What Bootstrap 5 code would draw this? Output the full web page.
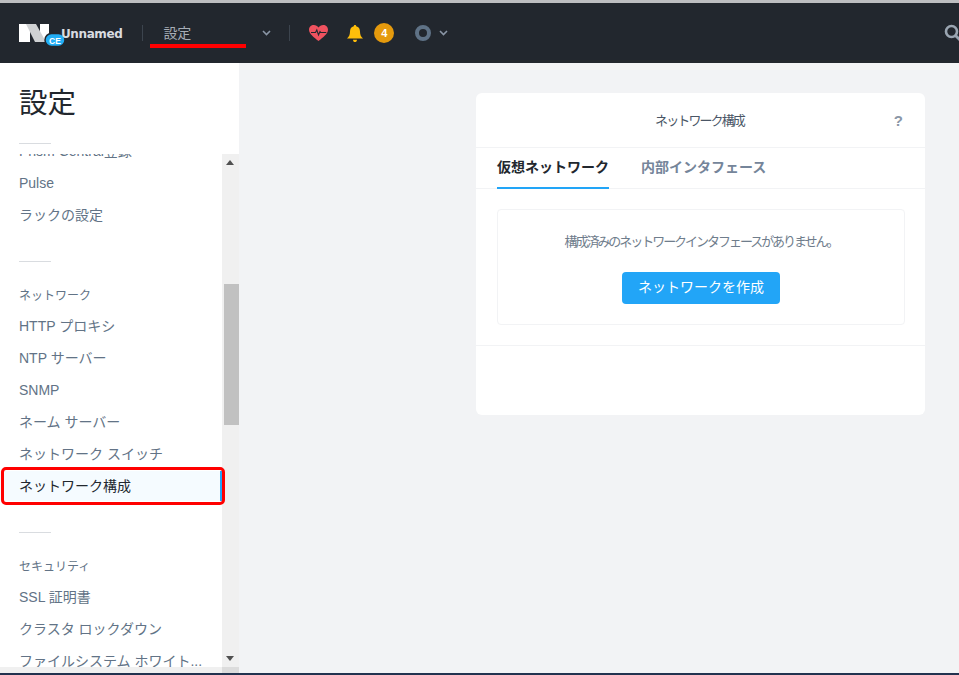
<!DOCTYPE html>
<html lang="ja">
<head>
    <meta charset="UTF-8">
    <meta name="viewport" content="width=device-width, initial-scale=1.0">
    <title>ネットワーク構成</title>
    <link href="https://cdn.jsdelivr.net/npm/bootstrap@5.3.2/dist/css/bootstrap.min.css" rel="stylesheet">
    <style>
        html, body {
            height: 100%;
            overflow: hidden;
        }
        body {
            background-color: #f2f3f5;
            font-family: "Liberation Sans", "Noto Sans CJK JP", sans-serif;
            font-size: 14px;
            color: #627386;
            border-top: 3px solid #bdbec0;
            border-bottom: 2px solid #22324f;
        }
        .app {
            height: 670px;
        }
        /* barra superior */
        .topbar {
            height: 60px;
            background-color: #22272e;
            padding-left: 19px;
        }
        .brand-name {
            font-family: "DejaVu Sans", sans-serif;
            font-weight: 700;
            font-size: 12px;
            letter-spacing: -.4px;
            color: #d9dce0;
            margin-left: -4px;
            margin-top: 2px;
        }
        .logo {
            width: 46px;
            height: 30px;
        }
        .vline {
            width: 1px;
            height: 16px;
            background-color: #3c444e;
        }
        .vline-first {
            margin-left: 20px;
        }
        .page-select {
            width: 108px;
            color: #a6adb6;
            margin-left: 20px;
            margin-right: 18px;
        }
        .icon-heart {
            margin-left: 19px;
        }
        .icon-bell {
            margin-left: 19px;
        }
        .alert-count {
            width: 20px;
            height: 20px;
            margin-left: 11px;
            background-color: #e59a0d;
            color: #fff;
            font-size: 11px;
            font-weight: 700;
        }
        .icon-ring {
            margin-left: 21px;
        }
        .search-icon {
            margin-left: auto;
            margin-right: -3px;
        }
        .mark-under {
            position: absolute;
            left: 150px;
            top: 41px;
            width: 96px;
            height: 4px;
            background-color: #f00;
        }
        /* menu lateral */
        .sidebar {
            width: 239px;
            background-color: #fff;
        }
        .side-title {
            height: 91px;
            padding: 23px 0 0 19px;
            font-size: 28.5px;
            line-height: 34px;
            color: #22272e;
        }
        .side-title .side-rule {
            margin-top: 23px;
            margin-left: 0;
        }
        .side-rule {
            width: 32px;
            height: 1px;
            background-color: #d9dce0;
            margin-left: 19px;
        }
        .side-body {
            height: 513px;
        }
        .side-list {
            width: 222px;
            overflow: hidden;
        }
        .side-list a {
            display: block;
            height: 32px;
            line-height: 32px;
            padding-left: 19px;
            color: #627386;
            text-decoration: none;
            white-space: nowrap;
        }
        .side-list a.clip {
            margin-top: -19px;
        }
        .side-list a.active {
            height: 30px;
            margin-top: 1px;
            margin-bottom: 1px;
            line-height: 30px;
            background-color: #f5fbff;
            border-right: 2px solid #22a5f7;
            color: #22272e;
        }
        .side-list .side-rule {
            margin-top: 30px;
            margin-bottom: 24px;
        }
        .side-list .active + .side-rule {
            margin-top: 31px;
        }
        .side-label {
            font-size: 12px;
            height: 18px;
            line-height: 21px;
            padding-left: 19px;
            margin-bottom: 6px;
        }
        .scroll-y {
            width: 17px;
            background-color: #f0f0f0;
        }
        .scroll-y .thumb {
            width: 15px;
            height: 141px;
            margin: 113px 0 0 2px;
            background-color: #c1c1c1;
        }
        .arrow {
            height: 17px;
            padding-left: 4px;
        }
        .scroll-x {
            height: 6px;
            background-color: #f0f0f0;
        }
        .scroll-x .corner {
            width: 17px;
            background-color: #dcdcdc;
        }
        .mark-box {
            position: absolute;
            left: 1px;
            top: 464px;
            width: 224px;
            height: 38px;
            border: 3px solid #f00;
            border-radius: 5px;
        }
        /* contenido */
        .main-area {
            padding-top: 30px;
            padding-left: 237px;
        }
        .net-card {
            width: 449px;
            height: 322px;
            border: 0;
            border-radius: 6px;
            background-color: #fff;
            color: #627386;
        }
        .net-head {
            height: 55px;
            padding-top: 2px;
            padding-right: 2px;
            border-bottom: 1px solid #f2f3f5;
            font-size: 13px;
            letter-spacing: -1.9px;
            color: #4a5666;
        }
        .help {
            position: absolute;
            right: 22px;
            top: 17px;
            font-weight: 700;
            font-size: 15px;
            letter-spacing: 0;
            color: #8a96a6;
        }
        .net-tabs {
            height: 41px;
            padding-left: 21px;
            border-bottom: 1px solid #f2f3f5;
        }
        .net-tabs span {
            height: 40px;
            line-height: 38px;
            font-weight: 700;
            color: #75859a;
        }
        .net-tabs .on {
            color: #22272e;
            border-bottom: 2px solid #22a5f7;
            height: 41px;
        }
        .net-body {
            height: 157px;
            padding: 20px 20px 0 21px;
            border-bottom: 1px solid #f2f3f5;
        }
        .empty-box {
            height: 116px;
            border: 1px solid #f2f3f5;
            border-radius: 4px;
            padding-top: 21px;
        }
        .empty-box p {
            font-size: 13px;
            letter-spacing: -2.04px;
            line-height: 21px;
            margin-bottom: 20px;
            color: #6f7d8c;
        }
        .btn-create {
            width: 158px;
            height: 32px;
            padding: 0 0 2px;
            border: 0;
            border-radius: 4px;
            background-color: #22a5f7;
            color: #fff;
            font-size: 14px;
        }
    </style>
</head>
<body>
    <div class="app position-relative d-flex flex-column">
        <!-- barra superior -->
        <nav class="topbar d-flex align-items-center flex-shrink-0">
            <svg class="logo" viewBox="0 0 46 30">
                <rect x="0" y="6" width="11" height="18" fill="#fff"/>
                <rect x="21" y="6" width="9" height="18" fill="#fff"/>
                <polygon points="7,6 17,6 27,24 16,24" fill="#cfd1d3"/>
                <rect x="26" y="15.500" width="20" height="13" rx="6.500" fill="#22aef5" stroke="#22272e" stroke-width="1.500"/>
                <text x="36" y="25.500" text-anchor="middle" font-family="Liberation Sans" font-size="8.500" font-weight="700" fill="#fff">CE</text>
            </svg>
            <span class="brand-name">Unnamed</span>
            <span class="vline vline-first"></span>
            <span class="page-select d-flex align-items-center justify-content-between">
                設定
                <svg width="9" height="6" viewBox="0 0 9 6"><path d="M1 1l3.500 3.500L8 1" fill="none" stroke="#8a96a6" stroke-width="1.600"/></svg>
            </span>
            <span class="vline"></span>
            <svg class="icon-heart" width="19" height="16" viewBox="0 0 19 16">
                <path d="M9.500 16C5 12.500 0 9 0 4.800 0 2 2.200 0 4.800 0c2 0 3.600 1 4.700 2.600C10.600 1 12.200 0 14.200 0 16.800 0 19 2 19 4.800 19 9 14 12.500 9.500 16z" fill="#f0525f"/>
                <path d="M2 7.500h4.500l1.300-2.500 1.700 5 1.500-3.500.8 1h5.500" fill="none" stroke="#22272e" stroke-width="1.100"/>
            </svg>
            <svg class="icon-bell" width="16" height="17" viewBox="0 0 16 17">
                <path d="M8 0c.8 0 1.200.5 1.200 1.200C11.800 1.800 13 3.800 13 6.500c0 3 .8 5 3 7H0c2.200-2 3-4 3-7 0-2.700 1.200-4.700 3.800-5.300C6.800.5 7.200 0 8 0z" fill="#ffbe0b"/>
                <path d="M6 14.700h4c0 1.400-.9 2.300-2 2.300s-2-.9-2-2.300z" fill="#ffbe0b"/>
            </svg>
            <span class="alert-count rounded-circle d-flex align-items-center justify-content-center">4</span>
            <svg class="icon-ring" width="16" height="16" viewBox="0 0 16 16">
                <circle cx="8" cy="8" r="6" fill="none" stroke="#5f7286" stroke-width="4"/>
            </svg>
            <svg class="ms-2" width="9" height="6" viewBox="0 0 9 6"><path d="M1 1l3.500 3.500L8 1" fill="none" stroke="#8a96a6" stroke-width="1.600"/></svg>
            <svg class="search-icon" width="18" height="18" viewBox="0 0 18 18">
                <circle cx="7.500" cy="7.500" r="5.500" fill="none" stroke="#9aa5b1" stroke-width="2.600"/>
                <path d="M11.500 11.500L17 17" stroke="#9aa5b1" stroke-width="3"/>
            </svg>
        </nav>
        <span class="mark-under"></span>

        <div class="d-flex flex-grow-1">
            <!-- menu lateral -->
            <aside class="sidebar d-flex flex-column flex-shrink-0">
                <div class="side-title">
                    設定
                    <div class="side-rule"></div>
                </div>
                <div class="side-body d-flex">
                    <div class="side-list">
                        <a href="#" class="clip">Prism Central登録</a>
                        <a href="#">Pulse</a>
                        <a href="#">ラックの設定</a>
                        <div class="side-rule"></div>
                        <div class="side-label">ネットワーク</div>
                        <a href="#">HTTP プロキシ</a>
                        <a href="#">NTP サーバー</a>
                        <a href="#">SNMP</a>
                        <a href="#">ネーム サーバー</a>
                        <a href="#">ネットワーク スイッチ</a>
                        <a href="#" class="active">ネットワーク構成</a>
                        <div class="side-rule"></div>
                        <div class="side-label">セキュリティ</div>
                        <a href="#">SSL 証明書</a>
                        <a href="#">クラスタ ロックダウン</a>
                        <a href="#">ファイルシステム ホワイト...</a>
                    </div>
                    <div class="scroll-y d-flex flex-column">
                        <div class="arrow d-flex align-items-center">
                            <svg width="8" height="5" viewBox="0 0 8 5"><polygon points="4,0 8,5 0,5" fill="#505050"/></svg>
                        </div>
                        <div class="thumb"></div>
                        <div class="arrow d-flex align-items-center mt-auto">
                            <svg width="8" height="5" viewBox="0 0 8 5"><polygon points="0,0 8,0 4,5" fill="#505050"/></svg>
                        </div>
                    </div>
                </div>
                <div class="scroll-x d-flex justify-content-end">
                    <div class="corner"></div>
                </div>
            </aside>

            <!-- contenido -->
            <main class="main-area flex-grow-1">
                <div class="card net-card">
                    <div class="net-head position-relative d-flex align-items-center justify-content-center">
                        ネットワーク構成
                        <span class="help">?</span>
                    </div>
                    <div class="net-tabs d-flex gap-2">
                        <span class="on">仮想ネットワーク</span>
                        <span class="ms-4">内部インタフェース</span>
                    </div>
                    <div class="net-body">
                        <div class="empty-box text-center">
                            <p>構成済みのネットワークインタフェースがありません。</p>
                            <button class="btn btn-create" type="button">ネットワークを作成</button>
                        </div>
                    </div>
                </div>
            </main>
        </div>
        <span class="mark-box"></span>
    </div>

    <script src="https://cdn.jsdelivr.net/npm/bootstrap@5.3.2/dist/js/bootstrap.bundle.min.js"></script>
</body>
</html>
